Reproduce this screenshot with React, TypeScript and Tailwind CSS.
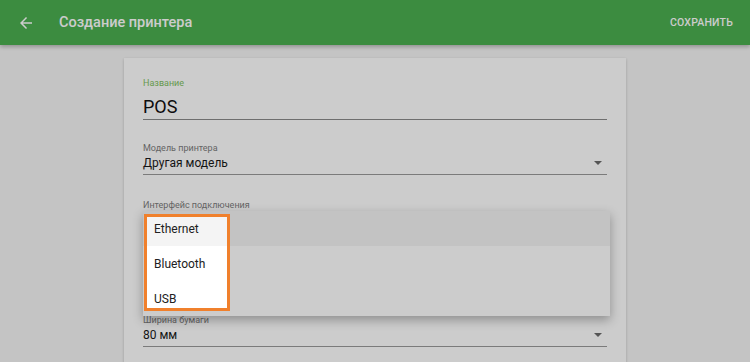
import React from "react";

function ArrowBack() {
  return (
    <svg width="18" height="18" viewBox="0 0 24 24" fill="currentColor">
      <path d="M20 11H7.83l5.59-5.59L12 4l-8 8 8 8 1.41-1.41L7.83 13H20v-2z" />
    </svg>
  );
}

function Caret() {
  return (
    <svg width="8" height="4" viewBox="0 0 8 4" className="text-[#6b6b6b]" fill="currentColor">
      <path d="M0 0h8L4 4z" />
    </svg>
  );
}

function Field({ label, value, className = "" }: { label: string; value?: string; className?: string }) {
  return (
    <div className={className}>
      <div className="text-[9px] leading-[12px] text-[#7d7d7d]">{label}</div>
      <div className="mt-[2px] h-[19px] pb-[4px] border-b border-[#9a9a9a] flex items-center justify-between pr-[5px]">
        <span className="text-[12px] leading-[16px] text-[#1a1a1a]">{value}</span>
        <Caret />
      </div>
    </div>
  );
}

const options = ["Ethernet", "Bluetooth", "USB"];

export default function App() {
  return (
    <div className="relative w-[750px] h-[362px] overflow-hidden bg-[#f6f6f6] font-['Roboto',sans-serif]">
      <header className="relative z-10 h-[45px] bg-[#4caf50] flex items-center pl-[17px] pr-[17px] text-white shadow-[0_2px_4px_rgba(0,0,0,0.25)]">
        <ArrowBack />
        <h1 className="ml-[24px] text-[14.5px] font-medium">Создание принтера</h1>
        <button className="ml-auto text-[10.5px] font-medium tracking-[0.2px]">СОХРАНИТЬ</button>
      </header>

      <main className="flex justify-center pt-[13px]">
        <div className="relative w-[502px] h-[400px] bg-white shadow-[0_1px_3px_rgba(0,0,0,0.2)] pt-[19px] px-[19px]">
          <div>
            <div className="text-[9px] leading-[12px] text-[#7fbf5f]">Название</div>
            <div className="mt-[7px] pb-[1px] border-b border-[#8a8a8a] text-[18px] leading-[22px] text-[#111]">POS</div>
          </div>

          <Field className="mt-[22px]" label="Модель принтера" value="Другая модель" />
          <Field className="mt-[24px]" label="Интерфейс подключения" />
          <div className="h-[60px]" />
          <Field className="mt-[22px]" label="Ширина бумаги" value="80 мм" />

          <div className="absolute z-20 left-[19px] top-[153px] w-[467px] bg-white shadow-[0_4px_10px_rgba(0,0,0,0.3)]">
            {options.map((o, i) => (
              <div
                key={o}
                className={`h-[35px] flex items-center px-[11px] text-[12px] text-[#212121] ${i === 0 ? "bg-[#f4f4f4]" : ""}`}
              >
                {o}
              </div>
            ))}
            <div className="absolute left-[1px] top-[3px] w-[86px] h-[97px] border-[3px] border-[#f0802c] shadow-[0_0_0_2000px_rgba(0,0,0,0.2)]" />
          </div>
        </div>
      </main>
    </div>
  );
}
